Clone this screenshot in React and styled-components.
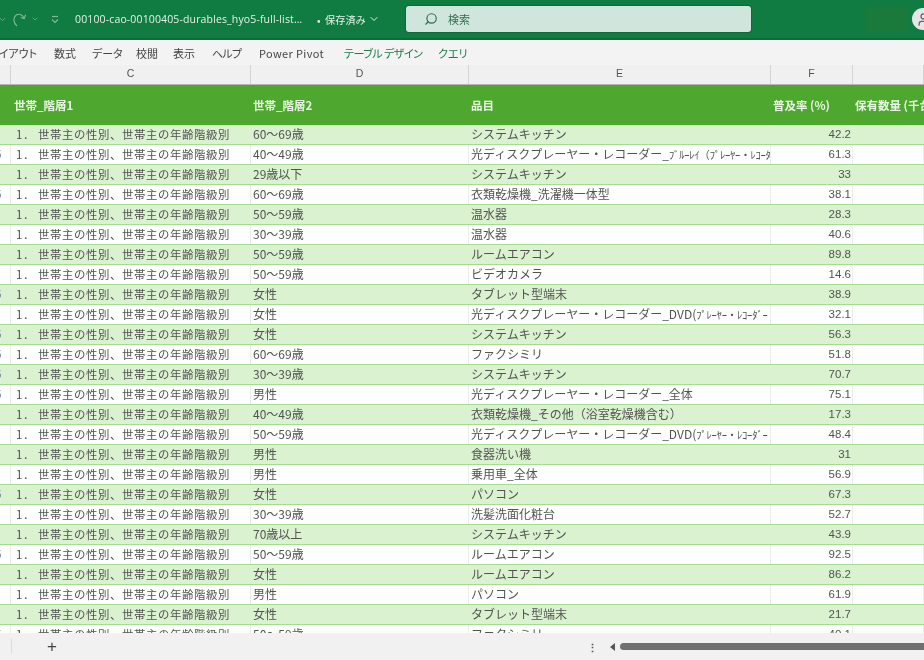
import { createGlobalStyle, styled } from 'styled-components'
import { ChevronDown, Search, User } from 'lucide-react'

const GlobalStyle = createGlobalStyle`
  html, body {
    margin: 0;
    height: 100%;
    overflow: hidden;
    background: #fff;
  }
`

const FONT = '"Noto Sans CJK JP", "Noto Sans", sans-serif'
const COLS = '11px 240px 218px 302px 82px 1fr'

const Window = styled.div`
  width: 924px;
  height: 660px;
  display: flex;
  flex-direction: column;
  overflow: hidden;
  font-family: ${FONT};
  filter: blur(0.4px);
`

const TitleBar = styled.div`
  height: 40px;
  flex: none;
  display: flex;
  align-items: center;
  background: #107c41;
  border-bottom: 2px solid #0c6b37;
  box-sizing: border-box;
  color: #e4f1e9;
  font-size: 11px;
  overflow: hidden;
`

const QuickAccess = styled.div`
  width: 75px;
  flex: none;
  display: flex;
  align-items: center;
  color: #7fbb98;
`

const QuickChevron = styled(ChevronDown)`
  flex: none;
  margin-left: ${props => props.$offset}px;
`

const QuickGlyph = styled.svg`
  flex: none;
  margin-left: ${props => props.$offset}px;
`

const FileName = styled.span`
  width: 242px;
  flex: none;
  font-family: "Open Sans", sans-serif;
  font-size: 10.5px;
  letter-spacing: 0.14px;
  white-space: nowrap;
`

const Saved = styled.span`
  width: 89px;
  flex: none;
  display: flex;
  align-items: center;
  gap: 2px;
  font-size: 10.2px;
  white-space: pre;
`

const SearchBox = styled.div`
  width: 345px;
  height: 26px;
  flex: none;
  display: flex;
  align-items: center;
  gap: 10px;
  padding-left: 18px;
  box-sizing: border-box;
  border-radius: 3px;
  background: #d0e5dc;
  box-shadow: 0 0 0 1px #0c6b37;
  color: #2f6f4d;

  svg {
    transform: scaleX(-1);
  }
`

const AccountBlock = styled.div`
  width: 42px;
  height: 25px;
  margin-left: 115px;
  flex: none;
  background: #1a7a3c;
`

const Avatar = styled.div`
  width: 22px;
  height: 22px;
  margin-left: 4px;
  flex: none;
  display: flex;
  align-items: center;
  justify-content: center;
  border-radius: 50%;
  background: #e6e6e6;
  color: #666;
`

const Tabs = styled.div`
  height: 25px;
  flex: none;
  display: flex;
  align-items: center;
  background: #f3f3f3;
  font-size: 11px;
  font-feature-settings: "palt";
  color: #444;
  white-space: nowrap;
`

const Tab = styled.span`
  flex: none;
  width: ${props => props.$width}px;
  color: ${props => (props.$accent ? '#1f7a48' : '#444')};
  letter-spacing: ${props => props.$tracking ?? 0}px;
`

const LeadTab = styled(Tab)`
  margin-left: -11px;
`

const ColumnHeaders = styled.div`
  height: 20px;
  flex: none;
  display: grid;
  grid-template-columns: ${COLS};
  background: #f0f0f0;
  border-bottom: 1px solid #b4b4b4;
  box-sizing: border-box;
`

const ColumnLetter = styled.div`
  display: flex;
  justify-content: center;
  padding-top: 1px;
  font-family: "Liberation Sans", sans-serif;
  font-size: 10.5px;
  line-height: 14px;
  color: #555;
  border-right: 1px solid #d4d4d4;
`

const Sheet = styled.div`
  flex: 1;
  min-height: 0;
  overflow: hidden;
  background: #fff;
`

const HeaderRow = styled.div`
  height: 40px;
  display: grid;
  grid-template-columns: ${COLS};
  align-items: center;
  background: #4ea72e;
  color: #eaf6e4;
  font-size: 11.5px;
  font-weight: 700;
  white-space: nowrap;
`

const HeaderCell = styled.div`
  padding-left: ${props => props.$inset}px;
  overflow: hidden;
`

const Row = styled.div`
  height: 20px;
  display: grid;
  grid-template-columns: ${COLS};
  box-sizing: border-box;
  align-items: center;
  background: ${props => (props.$shaded ? '#daf2d0' : '#fff')};
  border-bottom: 1px solid #a6dc92;
  color: #525252;
  font-size: 12px;
  line-height: 18px;
  white-space: nowrap;
`

const Cell = styled.div`
  height: 100%;
  padding-left: 2px;
  overflow: hidden;
  border-right: 1px solid ${props => (props.$shaded ? 'transparent' : '#ececec')};
`

const Gutter = styled(Cell)`
  padding: 0;
  text-indent: -4px;
  font-size: 10px;
  color: #7d90a6;
`

const Category = styled(Cell)`
  padding-left: 5px;
  font-size: 11.4px;
  letter-spacing: 0.6px;
`

const Value = styled(Cell)`
  padding: 0 1px 0 0;
  text-align: right;
  font-family: "Liberation Sans", sans-serif;
  font-size: 11.5px;
`

const Halfwidth = styled.span`
  font-size: 10.5px;
  letter-spacing: -0.2px;
`

const Footer = styled.div`
  height: 27px;
  flex: none;
  display: flex;
  align-items: center;
  background: #f1f1f1;
  color: #444;
`

const SheetNav = styled.span`
  width: 11px;
  height: 15px;
  flex: none;
  border-right: 1px solid #dcdcdc;
`

const AddSheet = styled.span`
  width: 575px;
  flex: none;
  padding-left: 35px;
  box-sizing: border-box;
  font-family: "Liberation Sans", sans-serif;
  font-size: 17px;
  line-height: 20px;
`

const Grip = styled.span`
  width: 23px;
  flex: none;
  font-size: 11px;
  font-weight: 700;
  color: #555;
`

const ScrollArrow = styled.span`
  width: 0;
  height: 0;
  flex: none;
  margin-right: 5px;
  border-style: solid;
  border-width: 4px 5px 4px 0;
  border-color: transparent #555 transparent transparent;
`

const ScrollThumb = styled.span`
  flex: 1;
  height: 7px;
  border-radius: 4px 0 0 4px;
  background: #707070;
`

function RedoArc() {
  return (
    <QuickGlyph $offset={5} width="15" height="15" viewBox="0 0 15 15" fill="none" stroke="currentColor" strokeWidth="1.1">
      <path d="M5 14 C1 10.5 1 5.5 4 3.2 C7 1.2 10.5 2.5 12 6" />
      <path d="M13.6 2.8 L12.2 6.6 L8.6 5.4" />
    </QuickGlyph>
  )
}

function CustomizeGlyph() {
  return (
    <QuickGlyph $offset={12} width="8" height="9" viewBox="0 0 8 9" fill="none" stroke="currentColor" strokeWidth="1.2">
      <path d="M1 1.5 H7" />
      <path d="M1 4.5 L4 7.5 L7 4.5" />
    </QuickGlyph>
  )
}

const AGE_6 = '60～69歳'
const AGE_5 = '50～59歳'
const AGE_4 = '40～49歳'
const AGE_3 = '30～39歳'
const KITCHEN = 'システムキッチン'
const AIRCON = 'ルームエアコン'
const TABLET = 'タブレット型端末'
const DISC = '光ディスクプレーヤー・レコーダー_'
const DVD_PLAYER = 'ﾌﾟﾚｰﾔｰ・ﾚｺｰﾀﾞｰ'

const rows = [
  [AGE_6, KITCHEN, '42.2'],
  [AGE_4, DISC, '61.3', 'ﾌﾞﾙｰﾚｲ（ﾌﾟﾚｰﾔｰ・ﾚｺｰﾀﾞｰ'],
  ['29歳以下', KITCHEN, '33'],
  [AGE_6, '衣類乾燥機_洗濯機一体型', '38.1'],
  [AGE_5, '温水器', '28.3'],
  [AGE_3, '温水器', '40.6'],
  [AGE_5, AIRCON, '89.8'],
  [AGE_5, 'ビデオカメラ', '14.6'],
  ['女性', TABLET, '38.9'],
  ['女性', DISC + 'DVD(', '32.1', DVD_PLAYER],
  ['女性', KITCHEN, '56.3'],
  [AGE_6, 'ファクシミリ', '51.8'],
  [AGE_3, KITCHEN, '70.7'],
  ['男性', DISC + '全体', '75.1'],
  [AGE_4, '衣類乾燥機_その他（浴室乾燥機含む）', '17.3'],
  [AGE_5, DISC + 'DVD(', '48.4', DVD_PLAYER],
  ['男性', '食器洗い機', '31'],
  ['男性', '乗用車_全体', '56.9'],
  ['女性', 'パソコン', '67.3'],
  [AGE_3, '洗髪洗面化粧台', '52.7'],
  ['70歳以上', KITCHEN, '43.9'],
  [AGE_5, AIRCON, '92.5'],
  ['女性', AIRCON, '86.2'],
  ['男性', 'パソコン', '61.9'],
  ['女性', TABLET, '21.7'],
  [AGE_5, 'ファクシミリ', '40.1'],
]

// row numbers whose last digit still peeks out of the scrolled gutter
const clippedNumbers = new Set([1, 3, 8, 10, 11, 12, 13, 18, 21, 25])

const tabs = [
  ['数式', 38],
  ['データ', 44],
  ['校閲', 37],
  ['表示', 39],
]

function App() {
  return (
    <Window>
      <GlobalStyle />
      <TitleBar>
        <QuickAccess>
          <QuickChevron size={9} $offset={-2} />
          <RedoArc />
          <QuickChevron size={8} $offset={4} />
          <CustomizeGlyph />
        </QuickAccess>
        <FileName>00100-cao-00100405-durables_hyo5-full-list…</FileName>
        <Saved>
          {'•  保存済み'}
          <ChevronDown size={12} />
        </Saved>
        <SearchBox>
          <Search size={14} />
          検索
        </SearchBox>
        <AccountBlock />
        <Avatar>
          <User size={15} />
        </Avatar>
      </TitleBar>

      <Tabs>
        <LeadTab $width={65}>レイアウト</LeadTab>
        {tabs.map(([label, width]) => (
          <Tab key={label} $width={width}>{label}</Tab>
        ))}
        <Tab $width={47} $tracking={-0.8}>ヘルプ</Tab>
        <Tab $tracking={0.35} $width={85}>Power Pivot</Tab>
        <Tab $accent $tracking={-0.5} $width={94}>テーブル デザイン</Tab>
        <Tab $accent $width={30}>クエリ</Tab>
      </Tabs>

      <ColumnHeaders>
        <ColumnLetter />
        <ColumnLetter>C</ColumnLetter>
        <ColumnLetter>D</ColumnLetter>
        <ColumnLetter>E</ColumnLetter>
        <ColumnLetter>F</ColumnLetter>
        <ColumnLetter />
      </ColumnHeaders>

      <Sheet>
        <HeaderRow>
          <HeaderCell $inset={0} />
          <HeaderCell $inset={3}>世帯_階層1</HeaderCell>
          <HeaderCell $inset={2}>世帯_階層2</HeaderCell>
          <HeaderCell $inset={2}>品目</HeaderCell>
          <HeaderCell $inset={2}>普及率 (%)</HeaderCell>
          <HeaderCell $inset={2}>保有数量 (千台)</HeaderCell>
        </HeaderRow>
        {rows.map(([group, item, rate, suffix], index) => {
          const shaded = index % 2 === 0
          return (
            <Row key={index} $shaded={shaded}>
              <Gutter $shaded={shaded}>{clippedNumbers.has(index) ? '5' : ''}</Gutter>
              <Category $shaded={shaded}>1． 世帯主の性別、世帯主の年齢階級別</Category>
              <Cell $shaded={shaded}>{group}</Cell>
              <Cell $shaded={shaded}>
                {item}
                {suffix ? <Halfwidth>{suffix}</Halfwidth> : null}
              </Cell>
              <Value $shaded={shaded}>{rate}</Value>
              <Cell $shaded={shaded} />
            </Row>
          )
        })}
      </Sheet>

      <Footer>
        <SheetNav />
        <AddSheet>+</AddSheet>
        <Grip>⋮</Grip>
        <ScrollArrow />
        <ScrollThumb />
      </Footer>
    </Window>
  )
}

export default App
